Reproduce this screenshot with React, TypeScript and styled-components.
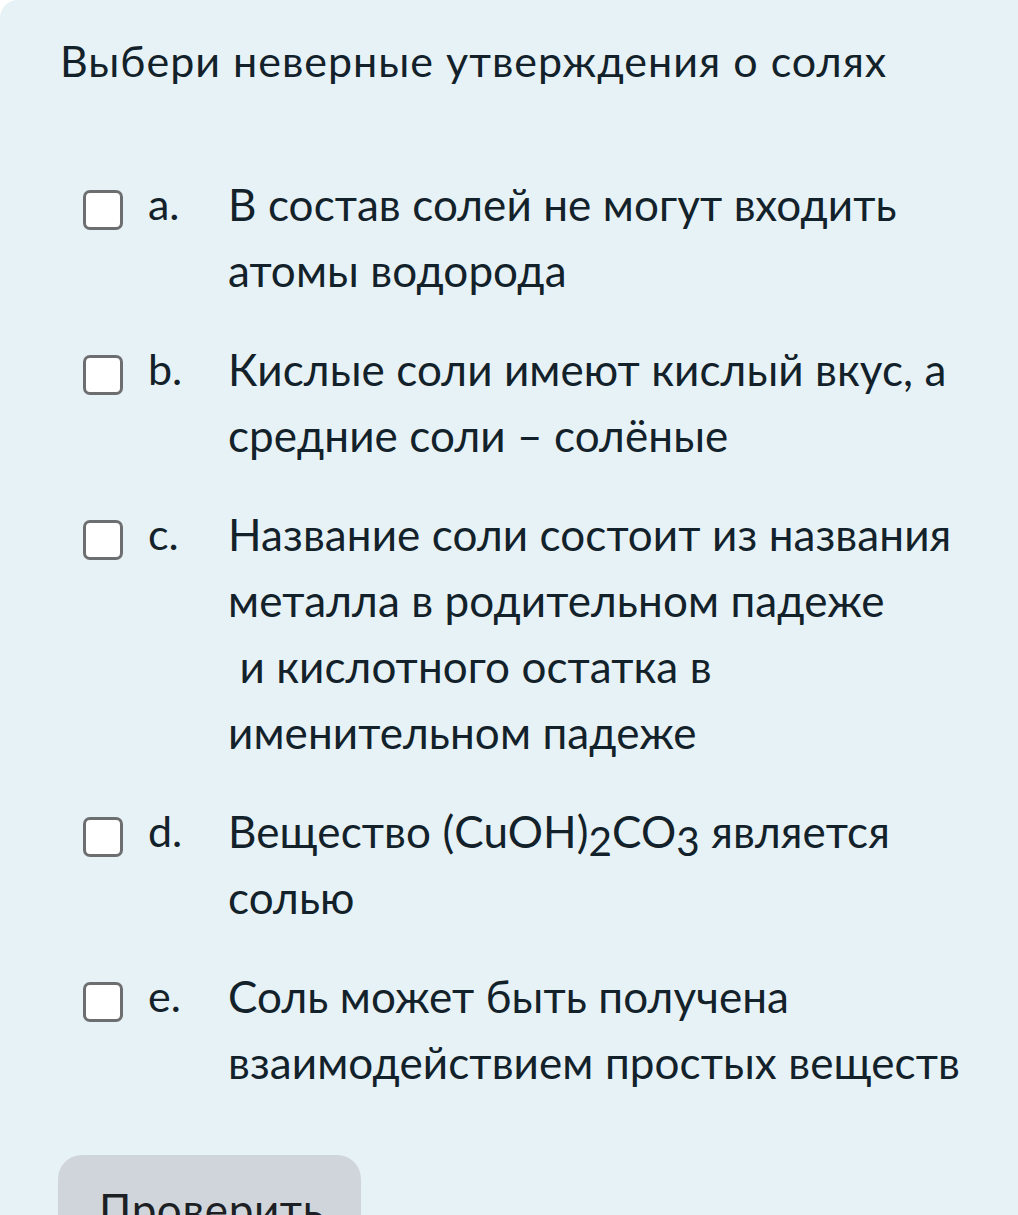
import React from "react";
import styled, { createGlobalStyle } from "styled-components";

const Global = createGlobalStyle`
  html, body {
    margin: 0;
    padding: 0;
    background: #ffffff;
  }
  body {
    font-family: "Lato", "Noto Sans", sans-serif;
    color: #13222a;
  }
`;

const Card = styled.div`
  background: #e7f2f6;
  border-top-left-radius: 18px;
  min-height: 1215px;
  box-sizing: border-box;
  padding: 31px 0 0 60px;
  overflow: hidden;
`;

const Title = styled.h1`
  margin: 0;
  font-size: 43px;
  font-weight: 400;
  line-height: 60px;
  letter-spacing: 1px;
`;

const OptionList = styled.div`
  display: flex;
  flex-direction: column;
  gap: 33px;
  margin-top: 80px;
  padding-left: 23px;
`;

const Option = styled.label`
  display: grid;
  grid-template-columns: 40px 105px 1fr;
  align-items: start;
  cursor: pointer;
`;

const Box = styled.span`
  width: 40px;
  height: 40px;
  box-sizing: border-box;
  border: 3px solid #6d6e70;
  border-radius: 7px;
  background: #ffffff;
  margin-top: 19px;
`;

const Letter = styled.span`
  padding-left: 25px;
  font-size: 43px;
  line-height: 66px;
`;

const Text = styled.span`
  font-size: 44px;
  line-height: 66px;
  letter-spacing: 0.1px;
  max-width: 790px;
`;

const Sub = styled.sub`
  font-size: 0.92em;
  vertical-align: -0.2em;
  line-height: 0;
`;

const CheckButton = styled.button`
  margin-top: 60px;
  margin-left: -2px;
  width: 303px;
  height: 90px;
  border: none;
  border-radius: 24px;
  background: #d0d5dc;
  color: #1c1f24;
  font-family: "Lato", "Noto Sans", sans-serif;
  font-size: 44px;
  letter-spacing: 0.6px;
  text-align: left;
  padding: 18px 0 0 41px;
  display: block;
  box-sizing: border-box;
`;

const options: { letter: string; text: React.ReactNode }[] = [
  { letter: "a.", text: <>В состав солей не могут входить<br />атомы водорода</> },
  { letter: "b.", text: <>Кислые соли имеют кислый вкус, а<br />средние соли – солёные</> },
  {
    letter: "c.",
    text: (
      <>
        Название соли состоит из названия
        <br />
        металла в родительном падеже
        <br />
        {"\u00a0"}и кислотного остатка в
        <br />
        именительном падеже
      </>
    ),
  },
  {
    letter: "d.",
    text: (
      <>
        Вещество (CuOH)<Sub>2</Sub>CO<Sub>3</Sub> является
        <br />
        солью
      </>
    ),
  },
  { letter: "e.", text: <>Соль может быть получена<br />взаимодействием простых веществ</> },
];

export default function App() {
  return (
    <>
      <Global />
      <Card>
        <Title>Выбери неверные утверждения о солях</Title>
        <OptionList>
          {options.map((o) => (
            <Option key={o.letter}>
              <Box />
              <Letter>{o.letter}</Letter>
              <Text>{o.text}</Text>
            </Option>
          ))}
        </OptionList>
        <CheckButton>Проверить</CheckButton>
      </Card>
    </>
  );
}
